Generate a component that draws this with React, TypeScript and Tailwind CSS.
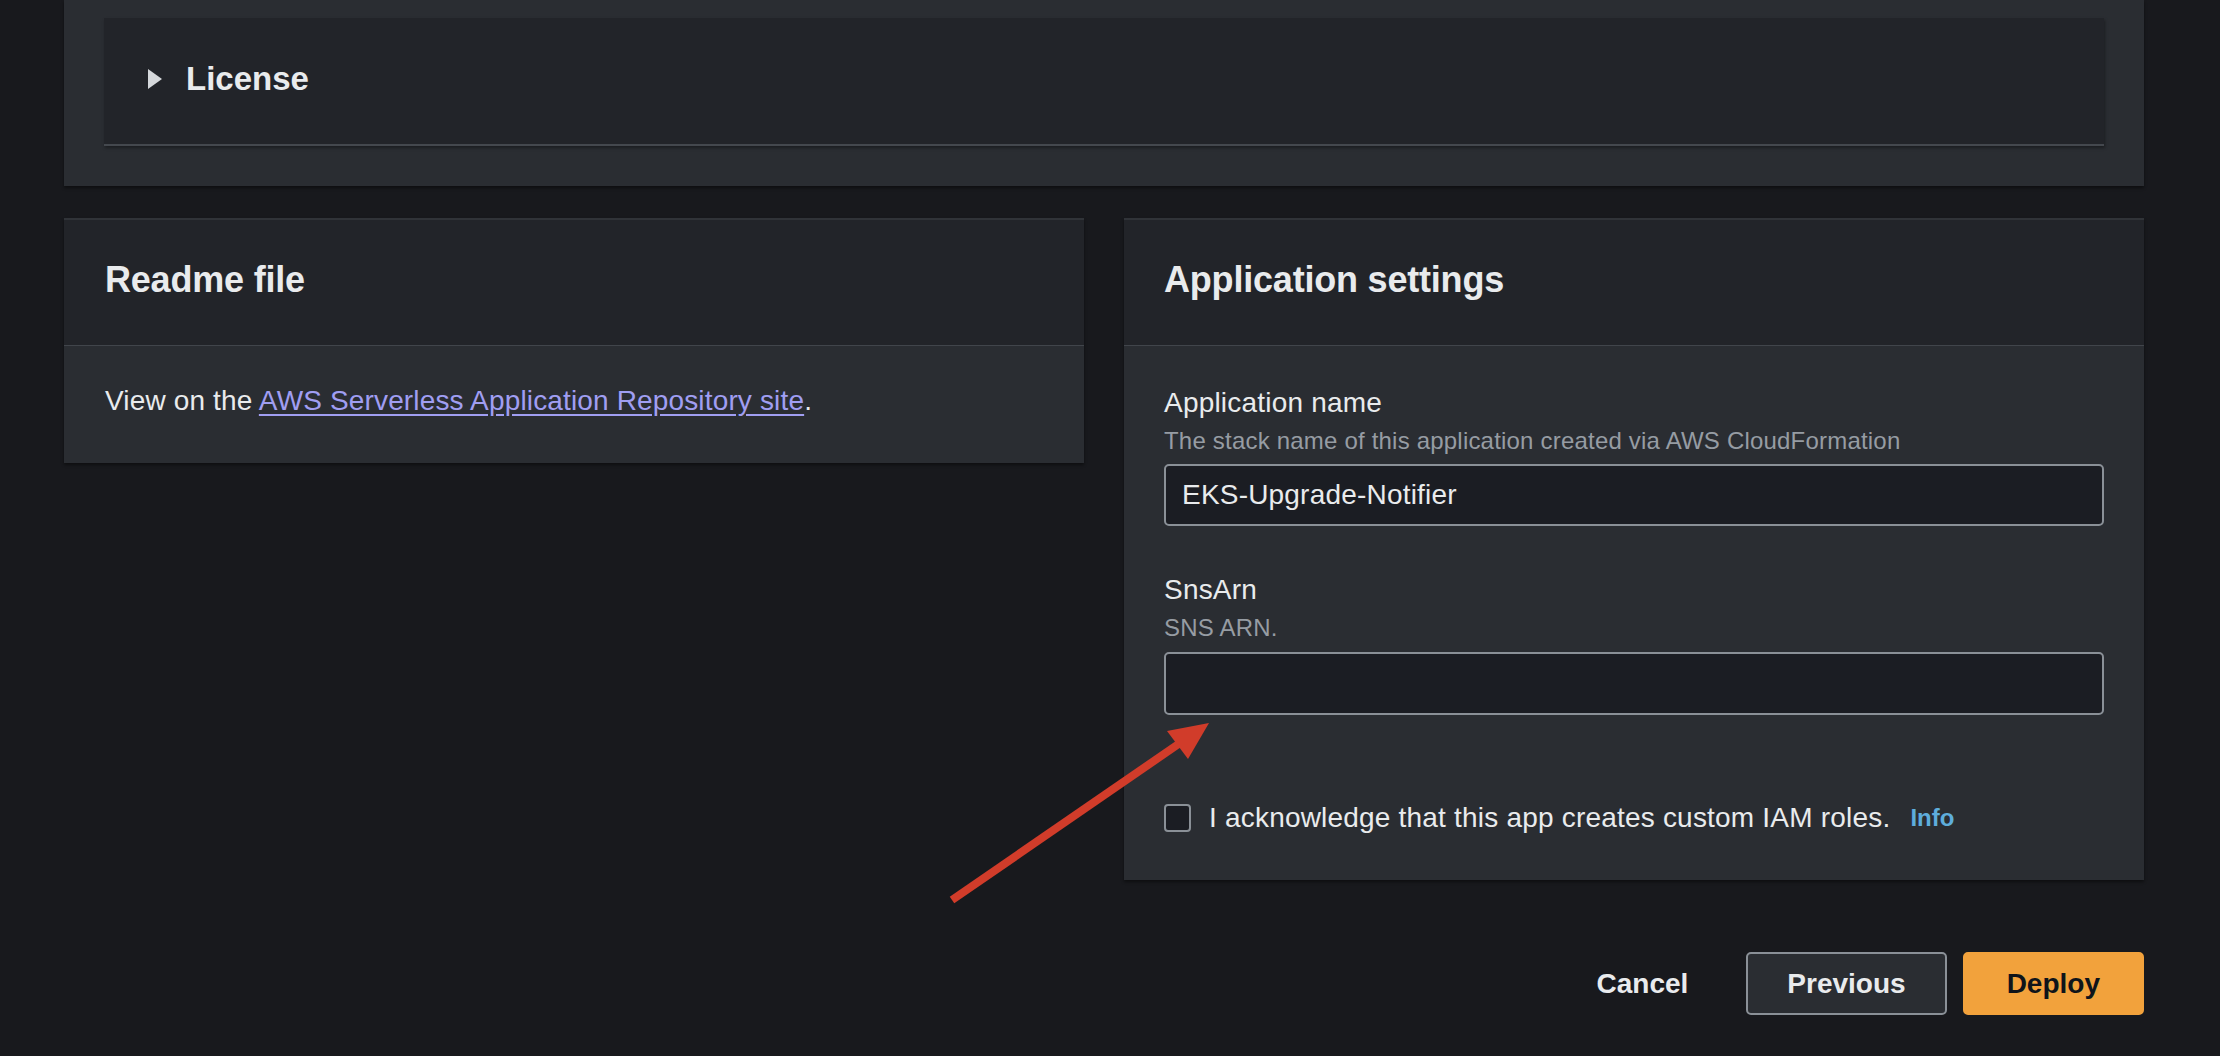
export default function App() {
  return (
    <div className="relative w-[2220px] h-[1056px] overflow-hidden bg-[#18191d] font-['Liberation_Sans',Arial,sans-serif] text-[#e9ebed]">
      <div className="ml-[64px] w-[2080px] flex flex-col">
        {/* License panel */}
        <div className="bg-[#2a2d32] px-[40px] pt-[18px] pb-[40px] shadow-[0_2px_3px_rgba(0,0,0,0.45)]">
          <div className="h-[128px] bg-[#222429] border-b-2 border-[#44484e] flex items-center pl-[43px] pb-[5px] shadow-[1px_2px_3px_rgba(0,0,0,0.35)]">
            <svg width="16" height="20" viewBox="0 0 16 20" className="mr-[23px]">
              <polygon points="1,0 15,10 1,20" fill="#d5d8db" />
            </svg>
            <span className="text-[33px] leading-[44px] font-bold">License</span>
          </div>
        </div>

        <div className="mt-[32px] grid grid-cols-2 gap-[40px] items-start">
          {/* Readme */}
          <div className="bg-[#2a2d32] border-t-2 border-[#303338] shadow-[0_2px_3px_rgba(0,0,0,0.45)]">
            <div className="h-[126px] bg-[#222429] flex items-center px-[41px] pb-[5px] border-b border-[#41454b]">
              <h2 className="text-[36px] leading-[44px] font-bold tracking-[-0.2px]">Readme file</h2>
            </div>
            <div className="px-[41px] pt-[37px] pb-[44px] text-[28px] leading-[36px] tracking-[0.15px]">
              View on the{" "}
              <a className="text-[#a09ef2] underline underline-offset-[4px]" href="#">
                AWS Serverless Application Repository site
              </a>
              .
            </div>
          </div>

          {/* Application settings */}
          <div className="bg-[#2a2d32] border-t-2 border-[#303338] shadow-[0_2px_3px_rgba(0,0,0,0.45)]">
            <div className="h-[126px] bg-[#222429] flex items-center px-[40px] pb-[5px] border-b border-[#41454b]">
              <h2 className="text-[36px] leading-[44px] font-bold tracking-[-0.2px]">Application settings</h2>
            </div>
            <div className="px-[40px] pt-[39px] pb-[44px] flex flex-col tracking-[0.2px]">
              <label className="text-[28px] leading-[36px]">Application name</label>
              <p className="mt-[4px] text-[24px] leading-[32px] text-[#969ca3]">
                The stack name of this application created via AWS CloudFormation
              </p>
              <div className="mt-[7px] h-[62px] bg-[#1b1d23] border-2 border-[#8a9097] rounded-[5px] flex items-center px-[16px] text-[28px]">
                EKS-Upgrade-Notifier
              </div>

              <label className="mt-[46px] text-[28px] leading-[36px]">SnsArn</label>
              <p className="mt-[4px] text-[24px] leading-[32px] text-[#969ca3]">SNS ARN.</p>
              <div className="mt-[8px] h-[63px] bg-[#1b1d23] border-2 border-[#8a9097] rounded-[5px]" />

              <div className="mt-[85px] flex items-center h-[36px]">
                <div className="w-[27px] h-[28px] rounded-[4px] border-2 border-[#8a9097] bg-[#1b1d23]" />
                <span className="ml-[18px] text-[28px] leading-[36px]">
                  I acknowledge that this app creates custom IAM roles.
                </span>
                <a href="#" className="ml-[20px] text-[24px] font-bold tracking-normal text-[#5eaddc]">
                  Info
                </a>
              </div>
            </div>
          </div>
        </div>

        {/* Actions */}
        <div className="mt-[72px] flex justify-end items-center gap-[16px]">
          <button className="h-[63px] px-[42px] text-[28px] font-bold text-[#e9ebed]">Cancel</button>
          <button className="h-[63px] px-[39px] text-[28px] font-bold text-[#e9ebed] bg-[#2a2d32] border-2 border-[#8a9097] rounded-[5px]">
            Previous
          </button>
          <button className="h-[63px] px-[42px] text-[28px] font-bold text-[#0f141a] bg-[#f2a23c] border-2 border-[#f2a23c] rounded-[5px]">
            Deploy
          </button>
        </div>
      </div>

      {/* annotation arrow */}
      <svg className="absolute inset-0 pointer-events-none" width="2220" height="1056" viewBox="0 0 2220 1056">
        <line x1="952" y1="900" x2="1180" y2="743" stroke="#d13c2a" strokeWidth="8" />
        <polygon points="1209,723 1167,731 1188,759" fill="#d13c2a" />
      </svg>
    </div>
  );
}
